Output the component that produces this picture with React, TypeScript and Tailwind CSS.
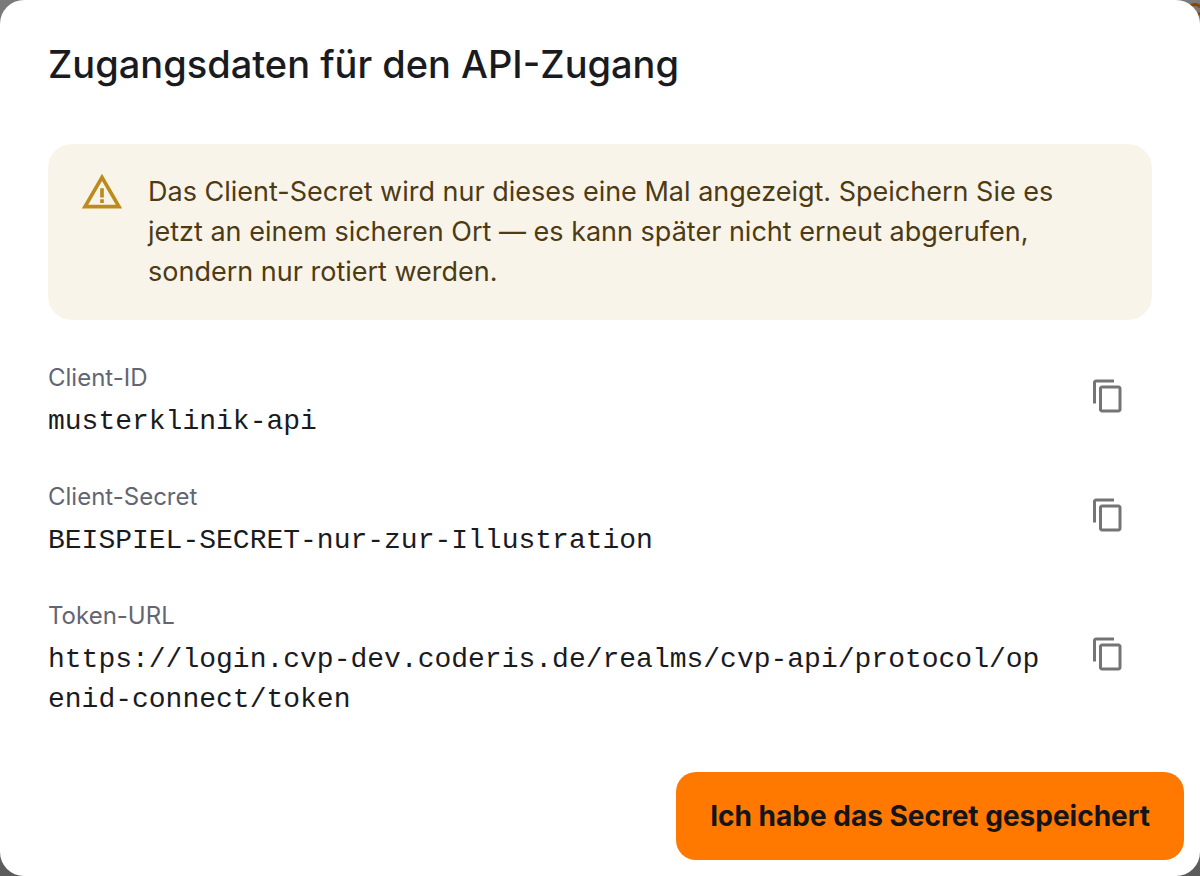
import React from "react";
import { MdContentCopy, MdWarningAmber } from "react-icons/md";

const fields = [
	{
		label: "Client-ID",
		value: "musterklinik-api",
	},
	{
		label: "Client-Secret",
		value: "BEISPIEL-SECRET-nur-zur-Illustration",
	},
	{
		label: "Token-URL",
		value:
			"https://login.cvp-dev.coderis.de/realms/cvp-api/protocol/openid-connect/token",
	},
];

export default function App() {
	const copyValue = (value: string) => {
		navigator.clipboard.writeText(value);
	};

	return (
		<div className="relative isolate min-h-screen bg-linear-to-b from-[#7a7a7a] to-[#5c5c5c] font-[Inter,sans-serif]">
			{/* page action behind the dialog */}
			<svg
				className="absolute top-0 right-0 -z-10 h-6 w-4"
				viewBox="0 0 16 24"
				fill="none"
				stroke="#8c4200"
				strokeWidth="3"
				aria-hidden="true"
			>
				<path d="M6 6q3-2 6-1.500t4 3M16 13l-4 4" />
			</svg>

			<div
				role="dialog"
				aria-labelledby="dialog-title"
				className="flex min-h-screen flex-col rounded-[24px] bg-white pb-4 text-[#1a1b1f]"
			>
				<h1
					id="dialog-title"
					className="px-12 pt-10 text-[38px] leading-12 font-medium"
				>
					Zugangsdaten für den API-Zugang
				</h1>

				<div className="mt-14 px-12">
					<div className="flex gap-6 rounded-[24px] bg-[#f9f4ea] py-7 pr-20 pl-8 text-[#4d3b14]">
						<span className="flex h-10 shrink-0 items-center text-[#bb8b1d]">
							<MdWarningAmber className="size-11" />
						</span>
						<p className="text-[27px] leading-10">
							Das Client-Secret wird nur dieses eine Mal
							angezeigt. Speichern Sie es jetzt an einem
							sicheren Ort — es kann später nicht erneut
							abgerufen, sondern nur rotiert werden.
						</p>
					</div>

					<dl className="mt-10 flex flex-col gap-[37px]">
						{fields.map((field) => (
							<div
								key={field.label}
								className="flex items-center gap-4"
							>
								<div className="min-w-0 flex-1">
									<dt className="text-[24px] leading-9 text-[#636573]">
										{field.label}
									</dt>
									<dd className="mt-1.5 font-['Liberation_Mono',monospace] text-[28px] leading-10 break-all">
										{field.value}
									</dd>
								</div>
								<button
									type="button"
									aria-label={`${field.label} kopieren`}
									className="mb-2.5 flex w-[88px] justify-center text-[#747474]"
									onClick={() => copyValue(field.value)}
								>
									<MdContentCopy className="size-9" />
								</button>
							</div>
						))}
					</dl>
				</div>

				<div className="mt-auto flex justify-end px-4">
					<button
						type="button"
						className="h-[88px] rounded-[20px] bg-[#ff7800] px-[34px] text-[28px] font-bold text-[#14151a]"
					>
						Ich habe das Secret gespeichert
					</button>
				</div>
			</div>
		</div>
	);
}
